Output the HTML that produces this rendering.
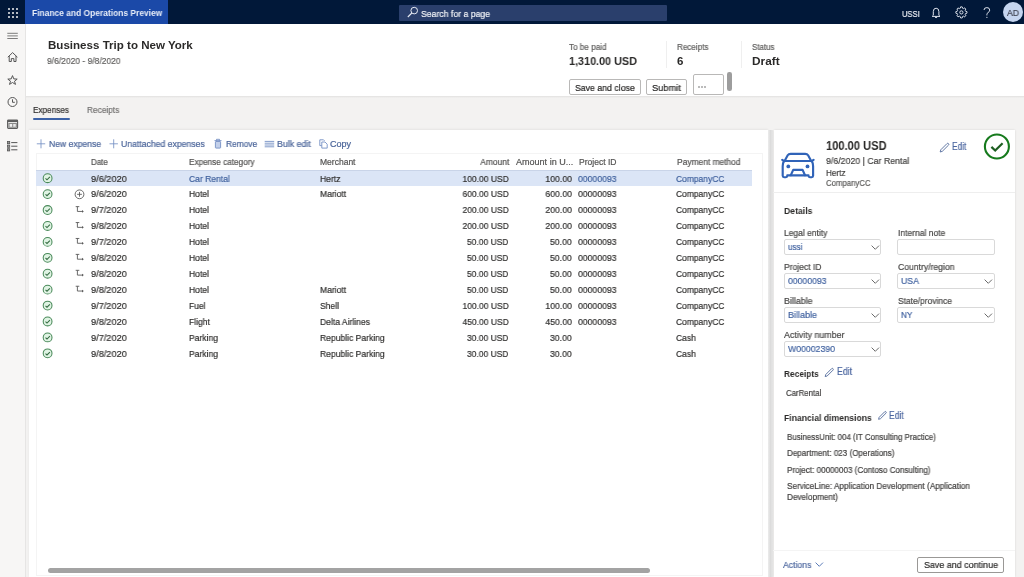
<!DOCTYPE html>
<html><head><meta charset="utf-8"><title>Business Trip to New York</title>
<style>
html,body{margin:0;padding:0;width:1024px;height:577px;overflow:hidden;background:#f3f2f1;}
body{position:relative;font-family:"Liberation Sans",sans-serif;}
.t{position:absolute;white-space:nowrap;line-height:1;will-change:transform;}
.n{-webkit-text-stroke:0.2px currentColor;}
.r{position:absolute;}
svg.r{overflow:visible;}
</style></head><body>
<div class="r" style="left:0px;top:0px;width:1024px;height:24px;background:#011839;"></div>
<div class="r" style="left:25px;top:0px;width:143px;height:24px;background:#1b49a8;"></div>
<div class="r" style="left:8px;top:8px;width:2px;height:2px;background:#f0f0f0;border-radius:1px;"></div>
<div class="r" style="left:8px;top:12px;width:2px;height:2px;background:#f0f0f0;border-radius:1px;"></div>
<div class="r" style="left:8px;top:16px;width:2px;height:2px;background:#f0f0f0;border-radius:1px;"></div>
<div class="r" style="left:12px;top:8px;width:2px;height:2px;background:#f0f0f0;border-radius:1px;"></div>
<div class="r" style="left:12px;top:12px;width:2px;height:2px;background:#f0f0f0;border-radius:1px;"></div>
<div class="r" style="left:12px;top:16px;width:2px;height:2px;background:#f0f0f0;border-radius:1px;"></div>
<div class="r" style="left:16px;top:8px;width:2px;height:2px;background:#f0f0f0;border-radius:1px;"></div>
<div class="r" style="left:16px;top:12px;width:2px;height:2px;background:#f0f0f0;border-radius:1px;"></div>
<div class="r" style="left:16px;top:16px;width:2px;height:2px;background:#f0f0f0;border-radius:1px;"></div>
<div class="t" style="top:8.98px;font-size:9px;color:#e9eef8;font-weight:700;left:31.70px;transform:scaleX(0.9371);transform-origin:left center;">Finance and Operations Preview</div>
<div class="r" style="left:399px;top:4.5px;width:268px;height:16px;background:#2a3f6c;border-radius:1px;"></div>
<svg class="r" style="left:0;top:0" width="1024" height="24" viewBox="0 0 1024 24">
<circle cx="414.2" cy="10.6" r="3.3" fill="none" stroke="#e8ecf4" stroke-width="1"/><line x1="411.8" y1="13" x2="407.8" y2="17" stroke="#e8ecf4" stroke-width="1.1"/>
<path d="M933.3 15.3 V11.6 Q933.3 8.2 936.1 8.2 Q938.9 8.2 938.9 11.6 V15.3 L940 16.4 H932.2 Z" fill="none" stroke="#dfe4ee" stroke-width="1"/>
<path d="M935 17.1 Q936.1 18.3 937.2 17.1" fill="none" stroke="#dfe4ee" stroke-width="1"/>
<path d="M965.53 11.21 L966.95 11.62 A5.6 5.6 0 0 1 966.95 13.18 L965.53 13.59 A4.3 4.3 0 0 1 965.16 14.48 L965.87 15.77 A5.6 5.6 0 0 1 964.77 16.87 L963.48 16.16 A4.3 4.3 0 0 1 962.59 16.53 L962.18 17.95 A5.6 5.6 0 0 1 960.62 17.95 L960.21 16.53 A4.3 4.3 0 0 1 959.32 16.16 L958.03 16.87 A5.6 5.6 0 0 1 956.93 15.77 L957.64 14.48 A4.3 4.3 0 0 1 957.27 13.59 L955.85 13.18 A5.6 5.6 0 0 1 955.85 11.62 L957.27 11.21 A4.3 4.3 0 0 1 957.64 10.32 L956.93 9.03 A5.6 5.6 0 0 1 958.03 7.93 L959.32 8.64 A4.3 4.3 0 0 1 960.21 8.27 L960.62 6.85 A5.6 5.6 0 0 1 962.18 6.85 L962.59 8.27 A4.3 4.3 0 0 1 963.48 8.64 L964.77 7.93 A5.6 5.6 0 0 1 965.87 9.03 L965.16 10.32 A4.3 4.3 0 0 1 965.53 11.21 Z" fill="none" stroke="#dfe4ee" stroke-width="1" stroke-linejoin="round"/>
<circle cx="961.4" cy="12.4" r="1.6" fill="none" stroke="#dfe4ee" stroke-width="1"/>
<path d="M984 10 Q984 7.6 986.9 7.6 Q989.7 7.6 989.7 10.1 Q989.7 11.7 988 12.6 Q986.9 13.2 986.9 14.5 V15.4" fill="none" stroke="#dfe4ee" stroke-width="1"/>
<circle cx="986.9" cy="17.3" r="0.65" fill="#dfe4ee"/>
</svg>
<div class="t n" style="top:8.66px;font-size:9.5px;color:#f2f4f8;font-weight:400;left:420.60px;transform:scaleX(0.9136);transform-origin:left center;">Search for a page</div>
<div class="t n" style="top:8.96px;font-size:9.5px;color:#eef1f7;font-weight:400;left:901.80px;transform:scaleX(0.7979);transform-origin:left center;">USSI</div>
<div class="r" style="left:1002.6px;top:2px;width:20.3px;height:20.3px;background:#c5d5f0;border-radius:50%;"></div>
<div class="t n" style="top:8.58px;font-size:9px;color:#3f4250;font-weight:400;left:1007.00px;transform:scaleX(0.9592);transform-origin:left center;">AD</div>
<div class="r" style="left:0px;top:24px;width:25.5px;height:553px;background:#f7f6f5;border-right:1px solid #e6e5e4;box-sizing:border-box;"></div>
<svg class="r" style="left:0;top:24px" width="25" height="140" viewBox="0 24 25 140">
<g stroke="#6e6e6e" stroke-width="0.9"><line x1="7.3" y1="33.3" x2="17.8" y2="33.3"/><line x1="7.3" y1="35.9" x2="17.8" y2="35.9"/><line x1="7.3" y1="38.5" x2="17.8" y2="38.5"/></g>
<path d="M7.8 57.2 L12.6 52.6 L17.4 57.2 M9.2 56 V61.5 H11.3 V58.6 H13.9 V61.5 H16 V56" fill="none" stroke="#555" stroke-width="1"/>
<path d="M12.5 75.6 L13.8 78.9 L17.2 79.1 L14.5 81.2 L15.5 84.4 L12.5 82.5 L9.5 84.4 L10.5 81.2 L7.8 79.1 L11.2 78.9 Z" fill="none" stroke="#555" stroke-width="1"/>
<circle cx="12.5" cy="102" r="4.5" fill="none" stroke="#555" stroke-width="1"/><path d="M12.5 99.3 V102.3 H14.8" fill="none" stroke="#555" stroke-width="1"/>
<rect x="7.6" y="120.1" width="10" height="8.3" rx="0.8" fill="none" stroke="#5c5c5c" stroke-width="1.1"/><rect x="7.6" y="120.1" width="10" height="2" fill="#5c5c5c"/><rect x="8.3" y="123" width="8.6" height="4.7" fill="#8a8a8a"/><rect x="9.6" y="124" width="2.6" height="2.8" fill="#f0f0f0"/><rect x="13.2" y="124" width="2.6" height="2.8" fill="#e8e8e8"/>
<g fill="#9a9a9a" stroke="#555" stroke-width="0.8"><rect x="7.5" y="141.5" width="2.2" height="2.2"/><rect x="7.5" y="145.1" width="2.2" height="2.2"/><rect x="7.5" y="148.7" width="2.2" height="2.2"/></g>
<g stroke="#555" stroke-width="1"><line x1="11.2" y1="142.6" x2="17.4" y2="142.6"/><line x1="11.2" y1="146.2" x2="17.4" y2="146.2"/><line x1="11.2" y1="149.8" x2="17.4" y2="149.8"/></g>
</svg>
<div class="r" style="left:25.5px;top:24px;width:998.5px;height:71.5px;background:#fff;"></div>
<div class="r" style="left:25.5px;top:95.5px;width:998.5px;height:481.5px;background:#f3f2f1;"></div>
<div class="r" style="left:25.5px;top:95.5px;width:998.5px;height:2.5px;background:linear-gradient(#e2e1e0,#f3f2f1);"></div>
<div class="t" style="top:39.92px;font-size:11.2px;color:#2b2a29;font-weight:700;left:47.80px;transform:scaleX(1.0336);transform-origin:left center;">Business Trip to New York</div>
<div class="t n" style="top:55.66px;font-size:9.5px;color:#5f5e5d;font-weight:400;left:47.00px;transform:scaleX(0.8931);transform-origin:left center;">9/6/2020 - 9/8/2020</div>
<div class="t n" style="top:42.60px;font-size:8.5px;color:#5f5e5d;font-weight:400;left:569.40px;transform:scaleX(0.956);transform-origin:left center;">To be paid</div>
<div class="t" style="top:56.07px;font-size:11.5px;color:#2b2a29;font-weight:700;left:569.40px;transform:scaleX(0.9402);transform-origin:left center;">1,310.00 USD</div>
<div class="r" style="left:666.3px;top:41px;width:1px;height:27px;background:#efefef;"></div>
<div class="t n" style="top:42.60px;font-size:8.5px;color:#5f5e5d;font-weight:400;left:677.20px;transform:scaleX(0.9527);transform-origin:left center;">Receipts</div>
<div class="t" style="top:56.07px;font-size:11.5px;color:#2b2a29;font-weight:700;left:677.40px;">6</div>
<div class="r" style="left:741px;top:41px;width:1px;height:27px;background:#efefef;"></div>
<div class="t n" style="top:42.60px;font-size:8.5px;color:#5f5e5d;font-weight:400;left:752.20px;transform:scaleX(0.9337);transform-origin:left center;">Status</div>
<div class="t" style="top:56.07px;font-size:11.5px;color:#2b2a29;font-weight:700;left:752.20px;transform:scaleX(1.0278);transform-origin:left center;">Draft</div>
<div class="r" style="left:569.2px;top:79.3px;width:71.7px;height:15.5px;border:1px solid #b9b8b7;border-radius:2px;box-sizing:border-box;background:#fff;"></div>
<div class="t n" style="top:82.76px;font-size:9.5px;color:#252423;font-weight:400;left:575.00px;transform:scaleX(0.9203);transform-origin:left center;">Save and close</div>
<div class="r" style="left:646.4px;top:79.3px;width:40.7px;height:15.5px;border:1px solid #b9b8b7;border-radius:2px;box-sizing:border-box;background:#fff;"></div>
<div class="t n" style="top:82.76px;font-size:9.5px;color:#252423;font-weight:400;left:652.20px;transform:scaleX(0.9748);transform-origin:left center;">Submit</div>
<div class="r" style="left:692.6px;top:74.3px;width:31px;height:20.8px;border:1px solid #b9b8b7;border-radius:2px;box-sizing:border-box;background:#fff;"></div>
<svg class="r" style="left:698px;top:86px" width="9" height="2" viewBox="0 0 9 2"><g fill="#444"><circle cx="1" cy="1" r="0.7"/><circle cx="4" cy="1" r="0.7"/><circle cx="7" cy="1" r="0.7"/></g></svg>
<div class="r" style="left:727px;top:72.2px;width:4.5px;height:19.1px;background:#9d9d9d;border-radius:2.2px;"></div>
<div class="t n" style="top:105.36px;font-size:9.5px;color:#323130;font-weight:400;left:33.30px;transform:scaleX(0.8608);transform-origin:left center;">Expenses</div>
<div class="r" style="left:33px;top:118px;width:37px;height:2px;background:#3d62a6;border-radius:1px;"></div>
<div class="t n" style="top:105.36px;font-size:9.5px;color:#737271;font-weight:400;left:86.90px;transform:scaleX(0.874);transform-origin:left center;">Receipts</div>
<div class="r" style="left:28.6px;top:130px;width:739.5px;height:447px;background:#fff;box-shadow:0 -1px 2px rgba(0,0,0,0.06);"></div>
<svg class="r" style="left:0;top:130px" width="360" height="24" viewBox="0 130 360 24">
<path d="M41 139.3 V148.3 M36.8 143.8 H45.2" stroke="#7590c4" stroke-width="0.85"/>
<path d="M113.7 139.3 V148.3 M109.5 143.8 H117.9" stroke="#7590c4" stroke-width="0.85"/>
<path d="M214.5 140.6 H221.5 M216.5 140.6 V139.3 H219.5 V140.6" fill="none" stroke="#7590c4" stroke-width="0.9"/>
<rect x="215.4" y="141.5" width="5.2" height="6.6" rx="0.6" fill="#c3d0ea" stroke="#7590c4" stroke-width="0.9"/>
<g stroke="#7590c4" stroke-width="0.9"><line x1="264.7" y1="141.4" x2="274.2" y2="141.4"/><line x1="264.7" y1="143.2" x2="274.2" y2="143.2"/><line x1="264.7" y1="145" x2="274.2" y2="145"/><line x1="264.7" y1="146.8" x2="274.2" y2="146.8"/></g>
<path d="M319.8 139.8 H323.5 L324.6 140.9 M319.8 139.8 V145.6 H321.8" fill="none" stroke="#7590c4" stroke-width="0.9"/>
<path d="M321.8 142 H325 L327.2 144.2 V148.1 H321.8 Z" fill="#fff" stroke="#7590c4" stroke-width="0.9"/>
</svg>
<div class="t n" style="top:139.58px;font-size:9px;color:#4a6499;font-weight:400;left:48.90px;transform:scaleX(0.9553);transform-origin:left center;">New expense</div>
<div class="t n" style="top:139.58px;font-size:9px;color:#4a6499;font-weight:400;left:120.80px;transform:scaleX(0.9624);transform-origin:left center;">Unattached expenses</div>
<div class="t n" style="top:139.58px;font-size:9px;color:#4a6499;font-weight:400;left:225.70px;transform:scaleX(0.9306);transform-origin:left center;">Remove</div>
<div class="t n" style="top:139.58px;font-size:9px;color:#4a6499;font-weight:400;left:277.00px;transform:scaleX(0.9793);transform-origin:left center;">Bulk edit</div>
<div class="t n" style="top:139.58px;font-size:9px;color:#4a6499;font-weight:400;left:329.80px;transform:scaleX(1.004);transform-origin:left center;">Copy</div>
<div class="r" style="left:35.8px;top:153.2px;width:727px;height:423.3px;border:1px solid #f4f4f4;box-sizing:border-box;"></div>
<div class="t n" style="top:158.10px;font-size:8.5px;color:#555453;font-weight:400;left:90.90px;transform:scaleX(0.9367);transform-origin:left center;">Date</div>
<div class="t n" style="top:158.10px;font-size:8.5px;color:#555453;font-weight:400;left:188.50px;transform:scaleX(0.9626);transform-origin:left center;">Expense category</div>
<div class="t n" style="top:158.10px;font-size:8.5px;color:#555453;font-weight:400;left:320.00px;transform:scaleX(1.0016);transform-origin:left center;">Merchant</div>
<div class="t n" style="top:158.10px;font-size:8.5px;color:#555453;font-weight:400;right:515.19px;transform:scaleX(0.9904);transform-origin:right center;">Amount</div>
<div class="t n" style="top:158.10px;font-size:8.5px;color:#555453;font-weight:400;left:515.70px;transform:scaleX(1.0623);transform-origin:left center;">Amount in U...</div>
<div class="t n" style="top:158.10px;font-size:8.5px;color:#555453;font-weight:400;left:578.90px;transform:scaleX(1.005);transform-origin:left center;">Project ID</div>
<div class="t n" style="top:158.10px;font-size:8.5px;color:#555453;font-weight:400;left:676.50px;transform:scaleX(0.9882);transform-origin:left center;">Payment method</div>
<div class="r" style="left:35.8px;top:169.5px;width:716px;height:16.2px;background:#dbe5f6;border-top:1px solid #c9d4e8;box-sizing:border-box;"></div>
<div class="t n" style="top:173.56px;font-size:9.5px;color:#2f2e2d;font-weight:400;left:90.60px;transform:scaleX(0.9663157894736841);transform-origin:left center;">9/6/2020</div>
<div class="t n" style="top:173.56px;font-size:9.5px;color:#3d5f9c;font-weight:400;left:188.50px;transform:scaleX(0.8999999999999999);transform-origin:left center;">Car Rental</div>
<div class="t n" style="top:173.56px;font-size:9.5px;color:#2f2e2d;font-weight:400;left:320.00px;transform:scaleX(0.8999999999999999);transform-origin:left center;">Hertz</div>
<div class="t n" style="top:173.56px;font-size:9.5px;color:#2f2e2d;font-weight:400;right:515.27px;transform:scaleX(0.8933684210526315);transform-origin:right center;">100.00 USD</div>
<div class="t n" style="top:173.56px;font-size:9.5px;color:#2f2e2d;font-weight:400;right:452.11px;transform:scaleX(0.9189473684210525);transform-origin:right center;">100.00</div>
<div class="t n" style="top:173.56px;font-size:9.5px;color:#3d5f9c;font-weight:400;left:578.10px;transform:scaleX(0.9113684210526315);transform-origin:left center;">00000093</div>
<div class="t n" style="top:173.56px;font-size:9.5px;color:#3d5f9c;font-weight:400;left:676.00px;transform:scaleX(0.8905263157894736);transform-origin:left center;">CompanyCC</div>
<div class="t n" style="top:189.48px;font-size:9.5px;color:#2f2e2d;font-weight:400;left:90.60px;transform:scaleX(0.9663157894736841);transform-origin:left center;">9/6/2020</div>
<div class="t n" style="top:189.48px;font-size:9.5px;color:#2f2e2d;font-weight:400;left:188.50px;transform:scaleX(0.8999999999999999);transform-origin:left center;">Hotel</div>
<div class="t n" style="top:189.48px;font-size:9.5px;color:#2f2e2d;font-weight:400;left:320.00px;transform:scaleX(0.8999999999999999);transform-origin:left center;">Mariott</div>
<div class="t n" style="top:189.48px;font-size:9.5px;color:#2f2e2d;font-weight:400;right:515.27px;transform:scaleX(0.8933684210526315);transform-origin:right center;">600.00 USD</div>
<div class="t n" style="top:189.48px;font-size:9.5px;color:#2f2e2d;font-weight:400;right:452.11px;transform:scaleX(0.9189473684210525);transform-origin:right center;">600.00</div>
<div class="t n" style="top:189.48px;font-size:9.5px;color:#2f2e2d;font-weight:400;left:578.10px;transform:scaleX(0.9113684210526315);transform-origin:left center;">00000093</div>
<div class="t n" style="top:189.48px;font-size:9.5px;color:#2f2e2d;font-weight:400;left:676.00px;transform:scaleX(0.8905263157894736);transform-origin:left center;">CompanyCC</div>
<div class="t n" style="top:205.40px;font-size:9.5px;color:#2f2e2d;font-weight:400;left:90.60px;transform:scaleX(0.9663157894736841);transform-origin:left center;">9/7/2020</div>
<div class="t n" style="top:205.40px;font-size:9.5px;color:#2f2e2d;font-weight:400;left:188.50px;transform:scaleX(0.8999999999999999);transform-origin:left center;">Hotel</div>
<div class="t n" style="top:205.40px;font-size:9.5px;color:#2f2e2d;font-weight:400;right:515.27px;transform:scaleX(0.8933684210526315);transform-origin:right center;">200.00 USD</div>
<div class="t n" style="top:205.40px;font-size:9.5px;color:#2f2e2d;font-weight:400;right:452.11px;transform:scaleX(0.9189473684210525);transform-origin:right center;">200.00</div>
<div class="t n" style="top:205.40px;font-size:9.5px;color:#2f2e2d;font-weight:400;left:578.10px;transform:scaleX(0.9113684210526315);transform-origin:left center;">00000093</div>
<div class="t n" style="top:205.40px;font-size:9.5px;color:#2f2e2d;font-weight:400;left:676.00px;transform:scaleX(0.8905263157894736);transform-origin:left center;">CompanyCC</div>
<div class="t n" style="top:221.32px;font-size:9.5px;color:#2f2e2d;font-weight:400;left:90.60px;transform:scaleX(0.9663157894736841);transform-origin:left center;">9/8/2020</div>
<div class="t n" style="top:221.32px;font-size:9.5px;color:#2f2e2d;font-weight:400;left:188.50px;transform:scaleX(0.8999999999999999);transform-origin:left center;">Hotel</div>
<div class="t n" style="top:221.32px;font-size:9.5px;color:#2f2e2d;font-weight:400;right:515.27px;transform:scaleX(0.8933684210526315);transform-origin:right center;">200.00 USD</div>
<div class="t n" style="top:221.32px;font-size:9.5px;color:#2f2e2d;font-weight:400;right:452.11px;transform:scaleX(0.9189473684210525);transform-origin:right center;">200.00</div>
<div class="t n" style="top:221.32px;font-size:9.5px;color:#2f2e2d;font-weight:400;left:578.10px;transform:scaleX(0.9113684210526315);transform-origin:left center;">00000093</div>
<div class="t n" style="top:221.32px;font-size:9.5px;color:#2f2e2d;font-weight:400;left:676.00px;transform:scaleX(0.8905263157894736);transform-origin:left center;">CompanyCC</div>
<div class="t n" style="top:237.24px;font-size:9.5px;color:#2f2e2d;font-weight:400;left:90.60px;transform:scaleX(0.9663157894736841);transform-origin:left center;">9/7/2020</div>
<div class="t n" style="top:237.24px;font-size:9.5px;color:#2f2e2d;font-weight:400;left:188.50px;transform:scaleX(0.8999999999999999);transform-origin:left center;">Hotel</div>
<div class="t n" style="top:237.24px;font-size:9.5px;color:#2f2e2d;font-weight:400;right:515.24px;transform:scaleX(0.8933684210526315);transform-origin:right center;">50.00 USD</div>
<div class="t n" style="top:237.24px;font-size:9.5px;color:#2f2e2d;font-weight:400;right:452.12px;transform:scaleX(0.9189473684210525);transform-origin:right center;">50.00</div>
<div class="t n" style="top:237.24px;font-size:9.5px;color:#2f2e2d;font-weight:400;left:578.10px;transform:scaleX(0.9113684210526315);transform-origin:left center;">00000093</div>
<div class="t n" style="top:237.24px;font-size:9.5px;color:#2f2e2d;font-weight:400;left:676.00px;transform:scaleX(0.8905263157894736);transform-origin:left center;">CompanyCC</div>
<div class="t n" style="top:253.16px;font-size:9.5px;color:#2f2e2d;font-weight:400;left:90.60px;transform:scaleX(0.9663157894736841);transform-origin:left center;">9/8/2020</div>
<div class="t n" style="top:253.16px;font-size:9.5px;color:#2f2e2d;font-weight:400;left:188.50px;transform:scaleX(0.8999999999999999);transform-origin:left center;">Hotel</div>
<div class="t n" style="top:253.16px;font-size:9.5px;color:#2f2e2d;font-weight:400;right:515.24px;transform:scaleX(0.8933684210526315);transform-origin:right center;">50.00 USD</div>
<div class="t n" style="top:253.16px;font-size:9.5px;color:#2f2e2d;font-weight:400;right:452.12px;transform:scaleX(0.9189473684210525);transform-origin:right center;">50.00</div>
<div class="t n" style="top:253.16px;font-size:9.5px;color:#2f2e2d;font-weight:400;left:578.10px;transform:scaleX(0.9113684210526315);transform-origin:left center;">00000093</div>
<div class="t n" style="top:253.16px;font-size:9.5px;color:#2f2e2d;font-weight:400;left:676.00px;transform:scaleX(0.8905263157894736);transform-origin:left center;">CompanyCC</div>
<div class="t n" style="top:269.08px;font-size:9.5px;color:#2f2e2d;font-weight:400;left:90.60px;transform:scaleX(0.9663157894736841);transform-origin:left center;">9/8/2020</div>
<div class="t n" style="top:269.08px;font-size:9.5px;color:#2f2e2d;font-weight:400;left:188.50px;transform:scaleX(0.8999999999999999);transform-origin:left center;">Hotel</div>
<div class="t n" style="top:269.08px;font-size:9.5px;color:#2f2e2d;font-weight:400;right:515.24px;transform:scaleX(0.8933684210526315);transform-origin:right center;">50.00 USD</div>
<div class="t n" style="top:269.08px;font-size:9.5px;color:#2f2e2d;font-weight:400;right:452.12px;transform:scaleX(0.9189473684210525);transform-origin:right center;">50.00</div>
<div class="t n" style="top:269.08px;font-size:9.5px;color:#2f2e2d;font-weight:400;left:578.10px;transform:scaleX(0.9113684210526315);transform-origin:left center;">00000093</div>
<div class="t n" style="top:269.08px;font-size:9.5px;color:#2f2e2d;font-weight:400;left:676.00px;transform:scaleX(0.8905263157894736);transform-origin:left center;">CompanyCC</div>
<div class="t n" style="top:285.00px;font-size:9.5px;color:#2f2e2d;font-weight:400;left:90.60px;transform:scaleX(0.9663157894736841);transform-origin:left center;">9/8/2020</div>
<div class="t n" style="top:285.00px;font-size:9.5px;color:#2f2e2d;font-weight:400;left:188.50px;transform:scaleX(0.8999999999999999);transform-origin:left center;">Hotel</div>
<div class="t n" style="top:285.00px;font-size:9.5px;color:#2f2e2d;font-weight:400;left:320.00px;transform:scaleX(0.8999999999999999);transform-origin:left center;">Mariott</div>
<div class="t n" style="top:285.00px;font-size:9.5px;color:#2f2e2d;font-weight:400;right:515.24px;transform:scaleX(0.8933684210526315);transform-origin:right center;">50.00 USD</div>
<div class="t n" style="top:285.00px;font-size:9.5px;color:#2f2e2d;font-weight:400;right:452.12px;transform:scaleX(0.9189473684210525);transform-origin:right center;">50.00</div>
<div class="t n" style="top:285.00px;font-size:9.5px;color:#2f2e2d;font-weight:400;left:578.10px;transform:scaleX(0.9113684210526315);transform-origin:left center;">00000093</div>
<div class="t n" style="top:285.00px;font-size:9.5px;color:#2f2e2d;font-weight:400;left:676.00px;transform:scaleX(0.8905263157894736);transform-origin:left center;">CompanyCC</div>
<div class="t n" style="top:300.92px;font-size:9.5px;color:#2f2e2d;font-weight:400;left:90.60px;transform:scaleX(0.9663157894736841);transform-origin:left center;">9/7/2020</div>
<div class="t n" style="top:300.92px;font-size:9.5px;color:#2f2e2d;font-weight:400;left:188.50px;transform:scaleX(0.8999999999999999);transform-origin:left center;">Fuel</div>
<div class="t n" style="top:300.92px;font-size:9.5px;color:#2f2e2d;font-weight:400;left:320.00px;transform:scaleX(0.8999999999999999);transform-origin:left center;">Shell</div>
<div class="t n" style="top:300.92px;font-size:9.5px;color:#2f2e2d;font-weight:400;right:515.27px;transform:scaleX(0.8933684210526315);transform-origin:right center;">100.00 USD</div>
<div class="t n" style="top:300.92px;font-size:9.5px;color:#2f2e2d;font-weight:400;right:452.11px;transform:scaleX(0.9189473684210525);transform-origin:right center;">100.00</div>
<div class="t n" style="top:300.92px;font-size:9.5px;color:#2f2e2d;font-weight:400;left:578.10px;transform:scaleX(0.9113684210526315);transform-origin:left center;">00000093</div>
<div class="t n" style="top:300.92px;font-size:9.5px;color:#2f2e2d;font-weight:400;left:676.00px;transform:scaleX(0.8905263157894736);transform-origin:left center;">CompanyCC</div>
<div class="t n" style="top:316.84px;font-size:9.5px;color:#2f2e2d;font-weight:400;left:90.60px;transform:scaleX(0.9663157894736841);transform-origin:left center;">9/8/2020</div>
<div class="t n" style="top:316.84px;font-size:9.5px;color:#2f2e2d;font-weight:400;left:188.50px;transform:scaleX(0.8999999999999999);transform-origin:left center;">Flight</div>
<div class="t n" style="top:316.84px;font-size:9.5px;color:#2f2e2d;font-weight:400;left:320.00px;transform:scaleX(0.8999999999999999);transform-origin:left center;">Delta Airlines</div>
<div class="t n" style="top:316.84px;font-size:9.5px;color:#2f2e2d;font-weight:400;right:515.27px;transform:scaleX(0.8933684210526315);transform-origin:right center;">450.00 USD</div>
<div class="t n" style="top:316.84px;font-size:9.5px;color:#2f2e2d;font-weight:400;right:452.11px;transform:scaleX(0.9189473684210525);transform-origin:right center;">450.00</div>
<div class="t n" style="top:316.84px;font-size:9.5px;color:#2f2e2d;font-weight:400;left:578.10px;transform:scaleX(0.9113684210526315);transform-origin:left center;">00000093</div>
<div class="t n" style="top:316.84px;font-size:9.5px;color:#2f2e2d;font-weight:400;left:676.00px;transform:scaleX(0.8905263157894736);transform-origin:left center;">CompanyCC</div>
<div class="t n" style="top:332.76px;font-size:9.5px;color:#2f2e2d;font-weight:400;left:90.60px;transform:scaleX(0.9663157894736841);transform-origin:left center;">9/7/2020</div>
<div class="t n" style="top:332.76px;font-size:9.5px;color:#2f2e2d;font-weight:400;left:188.50px;transform:scaleX(0.8999999999999999);transform-origin:left center;">Parking</div>
<div class="t n" style="top:332.76px;font-size:9.5px;color:#2f2e2d;font-weight:400;left:320.00px;transform:scaleX(0.8999999999999999);transform-origin:left center;">Republic Parking</div>
<div class="t n" style="top:332.76px;font-size:9.5px;color:#2f2e2d;font-weight:400;right:515.24px;transform:scaleX(0.8933684210526315);transform-origin:right center;">30.00 USD</div>
<div class="t n" style="top:332.76px;font-size:9.5px;color:#2f2e2d;font-weight:400;right:452.12px;transform:scaleX(0.9189473684210525);transform-origin:right center;">30.00</div>
<div class="t n" style="top:332.76px;font-size:9.5px;color:#2f2e2d;font-weight:400;left:676.00px;transform:scaleX(0.8905263157894736);transform-origin:left center;">Cash</div>
<div class="t n" style="top:348.68px;font-size:9.5px;color:#2f2e2d;font-weight:400;left:90.60px;transform:scaleX(0.9663157894736841);transform-origin:left center;">9/8/2020</div>
<div class="t n" style="top:348.68px;font-size:9.5px;color:#2f2e2d;font-weight:400;left:188.50px;transform:scaleX(0.8999999999999999);transform-origin:left center;">Parking</div>
<div class="t n" style="top:348.68px;font-size:9.5px;color:#2f2e2d;font-weight:400;left:320.00px;transform:scaleX(0.8999999999999999);transform-origin:left center;">Republic Parking</div>
<div class="t n" style="top:348.68px;font-size:9.5px;color:#2f2e2d;font-weight:400;right:515.24px;transform:scaleX(0.8933684210526315);transform-origin:right center;">30.00 USD</div>
<div class="t n" style="top:348.68px;font-size:9.5px;color:#2f2e2d;font-weight:400;right:452.12px;transform:scaleX(0.9189473684210525);transform-origin:right center;">30.00</div>
<div class="t n" style="top:348.68px;font-size:9.5px;color:#2f2e2d;font-weight:400;left:676.00px;transform:scaleX(0.8905263157894736);transform-origin:left center;">Cash</div>
<svg class="r" style="left:0;top:0" width="100" height="380" viewBox="0 0 100 380"><circle cx="47.6" cy="178.2" r="4.4" fill="#e0f4e4" stroke="#4a8a5a" stroke-width="1.05"/><path d="M45.5 178.4 L47 179.8 L49.9 176.9" fill="none" stroke="#356b42" stroke-width="1.05"/><circle cx="47.6" cy="194.11999999999998" r="4.4" fill="#e0f4e4" stroke="#4a8a5a" stroke-width="1.05"/><path d="M45.5 194.32 L47 195.72 L49.9 192.82" fill="none" stroke="#356b42" stroke-width="1.05"/><circle cx="79.5" cy="194.32" r="4.4" fill="none" stroke="#5a5a5a" stroke-width="0.9"/><path d="M79.5 191.92 V196.72 M77.1 194.32 H81.9" stroke="#5a5a5a" stroke-width="0.9"/><circle cx="47.6" cy="210.04" r="4.4" fill="#e0f4e4" stroke="#4a8a5a" stroke-width="1.05"/><path d="M45.5 210.24 L47 211.64000000000001 L49.9 208.74" fill="none" stroke="#356b42" stroke-width="1.05"/><path d="M75.7 206.64000000000001 H79.3 M77.4 206.64000000000001 V211.44 H82.6" fill="none" stroke="#5a5a5a" stroke-width="0.9"/><path d="M82 210.04 L83.8 211.44 L82 212.84 Z" fill="#5a5a5a"/><circle cx="47.6" cy="225.95999999999998" r="4.4" fill="#e0f4e4" stroke="#4a8a5a" stroke-width="1.05"/><path d="M45.5 226.16 L47 227.56 L49.9 224.66" fill="none" stroke="#356b42" stroke-width="1.05"/><path d="M75.7 222.56 H79.3 M77.4 222.56 V227.35999999999999 H82.6" fill="none" stroke="#5a5a5a" stroke-width="0.9"/><path d="M82 225.95999999999998 L83.8 227.35999999999999 L82 228.76 Z" fill="#5a5a5a"/><circle cx="47.6" cy="241.88" r="4.4" fill="#e0f4e4" stroke="#4a8a5a" stroke-width="1.05"/><path d="M45.5 242.08 L47 243.48000000000002 L49.9 240.58" fill="none" stroke="#356b42" stroke-width="1.05"/><path d="M75.7 238.48000000000002 H79.3 M77.4 238.48000000000002 V243.28 H82.6" fill="none" stroke="#5a5a5a" stroke-width="0.9"/><path d="M82 241.88 L83.8 243.28 L82 244.68 Z" fill="#5a5a5a"/><circle cx="47.6" cy="257.8" r="4.4" fill="#e0f4e4" stroke="#4a8a5a" stroke-width="1.05"/><path d="M45.5 258.0 L47 259.4 L49.9 256.5" fill="none" stroke="#356b42" stroke-width="1.05"/><path d="M75.7 254.4 H79.3 M77.4 254.4 V259.2 H82.6" fill="none" stroke="#5a5a5a" stroke-width="0.9"/><path d="M82 257.8 L83.8 259.2 L82 260.6 Z" fill="#5a5a5a"/><circle cx="47.6" cy="273.71999999999997" r="4.4" fill="#e0f4e4" stroke="#4a8a5a" stroke-width="1.05"/><path d="M45.5 273.91999999999996 L47 275.32 L49.9 272.41999999999996" fill="none" stroke="#356b42" stroke-width="1.05"/><path d="M75.7 270.32 H79.3 M77.4 270.32 V275.12 H82.6" fill="none" stroke="#5a5a5a" stroke-width="0.9"/><path d="M82 273.71999999999997 L83.8 275.12 L82 276.52 Z" fill="#5a5a5a"/><circle cx="47.6" cy="289.64" r="4.4" fill="#e0f4e4" stroke="#4a8a5a" stroke-width="1.05"/><path d="M45.5 289.84 L47 291.24 L49.9 288.34" fill="none" stroke="#356b42" stroke-width="1.05"/><path d="M75.7 286.24 H79.3 M77.4 286.24 V291.04 H82.6" fill="none" stroke="#5a5a5a" stroke-width="0.9"/><path d="M82 289.64 L83.8 291.04 L82 292.44 Z" fill="#5a5a5a"/><circle cx="47.6" cy="305.56" r="4.4" fill="#e0f4e4" stroke="#4a8a5a" stroke-width="1.05"/><path d="M45.5 305.76 L47 307.16 L49.9 304.26" fill="none" stroke="#356b42" stroke-width="1.05"/><circle cx="47.6" cy="321.47999999999996" r="4.4" fill="#e0f4e4" stroke="#4a8a5a" stroke-width="1.05"/><path d="M45.5 321.67999999999995 L47 323.08 L49.9 320.17999999999995" fill="none" stroke="#356b42" stroke-width="1.05"/><circle cx="47.6" cy="337.4" r="4.4" fill="#e0f4e4" stroke="#4a8a5a" stroke-width="1.05"/><path d="M45.5 337.59999999999997 L47 339.0 L49.9 336.09999999999997" fill="none" stroke="#356b42" stroke-width="1.05"/><circle cx="47.6" cy="353.32" r="4.4" fill="#e0f4e4" stroke="#4a8a5a" stroke-width="1.05"/><path d="M45.5 353.52 L47 354.92 L49.9 352.02" fill="none" stroke="#356b42" stroke-width="1.05"/></svg>
<div class="r" style="left:47.5px;top:568px;width:602px;height:4.5px;background:#a3a3a3;border-radius:2.5px;"></div>
<div class="r" style="left:768.1px;top:130px;width:5.4px;height:447px;background:linear-gradient(90deg,#ececec,#dcdcdc 50%,#e8e8e8);"></div>
<div class="r" style="left:773.5px;top:130.3px;width:241px;height:447px;background:#fff;box-shadow:0 0 2px rgba(0,0,0,0.12);"></div>
<svg class="r" style="left:0;top:0" width="1024" height="200" viewBox="0 0 1024 200"><g fill="none" stroke="#3063b8" stroke-width="2.15" stroke-linejoin="round" stroke-linecap="round"><path d="M784.6 161 L787.7 155.3 Q788.6 153.8 790.6 153.8 H805.2 Q807.2 153.8 808.1 155.3 L811.2 161"/><path d="M782.2 159.9 L784 161 H811.8 L813.6 159.9"/><path d="M784 161.2 Q782.7 163.2 782.7 166.2 V175.8 Q782.7 177.2 784.1 177.2 H785.9 Q787.3 177.2 787.3 175.8 V175.3 H808.5 V175.8 Q808.5 177.2 809.9 177.2 H811.7 Q813.1 177.2 813.1 175.8 V166.2 Q813.1 163.2 811.8 161.2"/><path d="M790.8 175.2 L793.2 169.9 H802.6 L805 175.2"/></g><circle cx="788.3" cy="166.4" r="1.9" fill="#3063b8"/><circle cx="807.5" cy="166.4" r="1.9" fill="#3063b8"/></svg>
<div class="t" style="top:139.74px;font-size:12px;color:#2b2a29;font-weight:700;left:826.30px;transform:scaleX(0.9266);transform-origin:left center;">100.00 USD</div>
<div class="t n" style="top:156.46px;font-size:9.5px;color:#403f3e;font-weight:400;left:826.30px;transform:scaleX(0.924);transform-origin:left center;">9/6/2020 | Car Rental</div>
<div class="t n" style="top:167.56px;font-size:9.5px;color:#403f3e;font-weight:400;left:826.30px;transform:scaleX(0.8588);transform-origin:left center;">Hertz</div>
<div class="t n" style="top:179.18px;font-size:9px;color:#5f5e5d;font-weight:400;left:826.30px;transform:scaleX(0.8656);transform-origin:left center;">CompanyCC</div>
<svg class="r" style="left:0;top:0" width="1024" height="577" viewBox="0 0 1024 577"><path d="M940.20 152.00 L940.77 149.81 L946.95 143.64 Q947.71 142.88 948.47 143.64 Q949.23 144.40 948.47 145.16 L942.29 151.34 Z" fill="none" stroke="#5b72a0" stroke-width="0.95" stroke-linejoin="round"/></svg>
<div class="t n" style="top:142.23px;font-size:10px;color:#4c67a0;font-weight:400;left:951.70px;transform:scaleX(0.829);transform-origin:left center;">Edit</div>
<svg class="r" style="left:983px;top:133px" width="28" height="28" viewBox="0 0 28 28"><circle cx="13.9" cy="13.5" r="12" fill="none" stroke="#167a1d" stroke-width="2.1"/><path d="M8.4 13.9 L12.2 17.5 L19.6 10.3" fill="none" stroke="#1d5e21" stroke-width="2.2"/></svg>
<div class="r" style="left:773px;top:192.3px;width:241.5px;height:1px;background:#eeeeee;"></div>
<div class="t" style="top:205.96px;font-size:9.5px;color:#2b2a29;font-weight:700;left:784.20px;transform:scaleX(0.9146);transform-origin:left center;">Details</div>
<div class="t n" style="top:228.58px;font-size:9px;color:#474645;font-weight:400;left:784.30px;transform:scaleX(0.9428);transform-origin:left center;">Legal entity</div>
<div class="r" style="left:783.9px;top:239.1px;width:97.60000000000001px;height:15.9px;border:1px solid #d9d9d9;box-sizing:border-box;background:#fff;border-radius:2px;"></div>
<div class="t n" style="top:241.86px;font-size:9.5px;color:#4062a0;font-weight:400;left:787.90px;transform:scaleX(0.8516);transform-origin:left center;">ussi</div>
<svg class="r" style="left:870.6999999999999px;top:244.7px" width="9" height="6" viewBox="0 0 9 6"><path d="M0.6 0.6 L4.3 4.3 L8 0.6" fill="none" stroke="#6a6a6a" stroke-width="1"/></svg>
<div class="t n" style="top:228.58px;font-size:9px;color:#474645;font-weight:400;left:897.50px;transform:scaleX(0.9452);transform-origin:left center;">Internal note</div>
<div class="r" style="left:897.1px;top:239.1px;width:97.60000000000001px;height:15.9px;border:1px solid #d9d9d9;box-sizing:border-box;background:#fff;border-radius:2px;"></div>
<div class="t n" style="top:262.68px;font-size:9px;color:#474645;font-weight:400;left:784.30px;transform:scaleX(0.9491);transform-origin:left center;">Project ID</div>
<div class="r" style="left:783.9px;top:273.2px;width:97.60000000000001px;height:15.9px;border:1px solid #d9d9d9;box-sizing:border-box;background:#fff;border-radius:2px;"></div>
<div class="t n" style="top:275.96px;font-size:9.5px;color:#4062a0;font-weight:400;left:787.90px;transform:scaleX(0.9107);transform-origin:left center;">00000093</div>
<svg class="r" style="left:870.6999999999999px;top:278.8px" width="9" height="6" viewBox="0 0 9 6"><path d="M0.6 0.6 L4.3 4.3 L8 0.6" fill="none" stroke="#6a6a6a" stroke-width="1"/></svg>
<div class="t n" style="top:262.68px;font-size:9px;color:#474645;font-weight:400;left:897.50px;transform:scaleX(0.957);transform-origin:left center;">Country/region</div>
<div class="r" style="left:897.1px;top:273.2px;width:97.60000000000001px;height:15.9px;border:1px solid #d9d9d9;box-sizing:border-box;background:#fff;border-radius:2px;"></div>
<div class="t n" style="top:275.96px;font-size:9.5px;color:#4062a0;font-weight:400;left:901.10px;transform:scaleX(0.9198);transform-origin:left center;">USA</div>
<svg class="r" style="left:983.9px;top:278.8px" width="9" height="6" viewBox="0 0 9 6"><path d="M0.6 0.6 L4.3 4.3 L8 0.6" fill="none" stroke="#6a6a6a" stroke-width="1"/></svg>
<div class="t n" style="top:296.68px;font-size:9px;color:#474645;font-weight:400;left:784.30px;transform:scaleX(0.9819);transform-origin:left center;">Billable</div>
<div class="r" style="left:783.9px;top:307.2px;width:97.60000000000001px;height:15.9px;border:1px solid #d9d9d9;box-sizing:border-box;background:#fff;border-radius:2px;"></div>
<div class="t n" style="top:309.96px;font-size:9.5px;color:#4062a0;font-weight:400;left:787.90px;transform:scaleX(0.9466);transform-origin:left center;">Billable</div>
<svg class="r" style="left:870.6999999999999px;top:312.8px" width="9" height="6" viewBox="0 0 9 6"><path d="M0.6 0.6 L4.3 4.3 L8 0.6" fill="none" stroke="#6a6a6a" stroke-width="1"/></svg>
<div class="t n" style="top:296.68px;font-size:9px;color:#474645;font-weight:400;left:897.50px;transform:scaleX(0.9382);transform-origin:left center;">State/province</div>
<div class="r" style="left:897.1px;top:307.2px;width:97.60000000000001px;height:15.9px;border:1px solid #d9d9d9;box-sizing:border-box;background:#fff;border-radius:2px;"></div>
<div class="t n" style="top:309.96px;font-size:9.5px;color:#4062a0;font-weight:400;left:901.10px;transform:scaleX(0.8709);transform-origin:left center;">NY</div>
<svg class="r" style="left:983.9px;top:312.8px" width="9" height="6" viewBox="0 0 9 6"><path d="M0.6 0.6 L4.3 4.3 L8 0.6" fill="none" stroke="#6a6a6a" stroke-width="1"/></svg>
<div class="t n" style="top:330.68px;font-size:9px;color:#474645;font-weight:400;left:784.30px;transform:scaleX(0.9835);transform-origin:left center;">Activity number</div>
<div class="r" style="left:783.9px;top:341.2px;width:97.60000000000001px;height:15.9px;border:1px solid #d9d9d9;box-sizing:border-box;background:#fff;border-radius:2px;"></div>
<div class="t n" style="top:343.96px;font-size:9.5px;color:#4062a0;font-weight:400;left:787.90px;transform:scaleX(0.917);transform-origin:left center;">W00002390</div>
<svg class="r" style="left:870.6999999999999px;top:346.8px" width="9" height="6" viewBox="0 0 9 6"><path d="M0.6 0.6 L4.3 4.3 L8 0.6" fill="none" stroke="#6a6a6a" stroke-width="1"/></svg>
<div class="t" style="top:369.46px;font-size:9.5px;color:#2b2a29;font-weight:700;left:784.20px;transform:scaleX(0.8785);transform-origin:left center;">Receipts</div>
<svg class="r" style="left:0;top:0" width="1024" height="577" viewBox="0 0 1024 577"><path d="M825.20 376.60 L825.74 374.53 L831.59 368.68 Q832.31 367.96 833.03 368.68 Q833.75 369.40 833.03 370.12 L827.18 375.97 Z" fill="none" stroke="#5b72a0" stroke-width="0.95" stroke-linejoin="round"/></svg>
<div class="t n" style="top:367.14px;font-size:10px;color:#4c67a0;font-weight:400;left:836.50px;transform:scaleX(0.8696);transform-origin:left center;">Edit</div>
<div class="t n" style="top:388.60px;font-size:8.5px;color:#403f3e;font-weight:400;left:786.00px;transform:scaleX(0.9203);transform-origin:left center;">CarRental</div>
<div class="t" style="top:412.66px;font-size:9.5px;color:#2b2a29;font-weight:700;left:784.20px;transform:scaleX(0.9088);transform-origin:left center;">Financial dimensions</div>
<svg class="r" style="left:0;top:0" width="1024" height="577" viewBox="0 0 1024 577"><path d="M878.60 419.30 L879.11 417.35 L884.63 411.82 Q885.32 411.14 886.00 411.82 Q886.68 412.50 886.00 413.18 L880.47 418.70 Z" fill="none" stroke="#5b72a0" stroke-width="0.95" stroke-linejoin="round"/></svg>
<div class="t n" style="top:410.54px;font-size:10px;color:#4c67a0;font-weight:400;left:889.30px;transform:scaleX(0.8464);transform-origin:left center;">Edit</div>
<div class="t n" style="top:432.90px;font-size:8.5px;color:#403f3e;font-weight:400;left:786.70px;transform:scaleX(0.9327);transform-origin:left center;">BusinessUnit: 004 (IT Consulting Practice)</div>
<div class="t n" style="top:449.20px;font-size:8.5px;color:#403f3e;font-weight:400;left:786.70px;transform:scaleX(0.952);transform-origin:left center;">Department: 023 (Operations)</div>
<div class="t n" style="top:465.80px;font-size:8.5px;color:#403f3e;font-weight:400;left:786.70px;transform:scaleX(0.949);transform-origin:left center;">Project: 00000003 (Contoso Consulting)</div>
<div class="t n" style="top:482.30px;font-size:8.5px;color:#403f3e;font-weight:400;left:786.70px;transform:scaleX(0.9653);transform-origin:left center;">ServiceLine: Application Development (Application</div>
<div class="t n" style="top:493.20px;font-size:8.5px;color:#403f3e;font-weight:400;left:786.70px;transform:scaleX(0.9639);transform-origin:left center;">Development)</div>
<div class="r" style="left:773px;top:549.5px;width:241.5px;height:1px;background:#f4f4f4;"></div>
<div class="t n" style="top:559.66px;font-size:9.5px;color:#4f69a0;font-weight:400;left:783.20px;transform:scaleX(0.9114);transform-origin:left center;">Actions</div>
<svg class="r" style="left:814.5px;top:561.5px" width="9" height="6" viewBox="0 0 9 6"><path d="M0.6 0.6 L4.3 4.3 L8 0.6" fill="none" stroke="#4a6db0" stroke-width="0.9"/></svg>
<div class="r" style="left:917.3px;top:557.4px;width:87.1px;height:15.4px;border:1px solid #9a9896;box-sizing:border-box;background:#fff;border-radius:2px;"></div>
<div class="t n" style="top:560.26px;font-size:9.5px;color:#2b2a29;font-weight:400;left:923.70px;transform:scaleX(0.9402);transform-origin:left center;">Save and continue</div>
</body></html>
